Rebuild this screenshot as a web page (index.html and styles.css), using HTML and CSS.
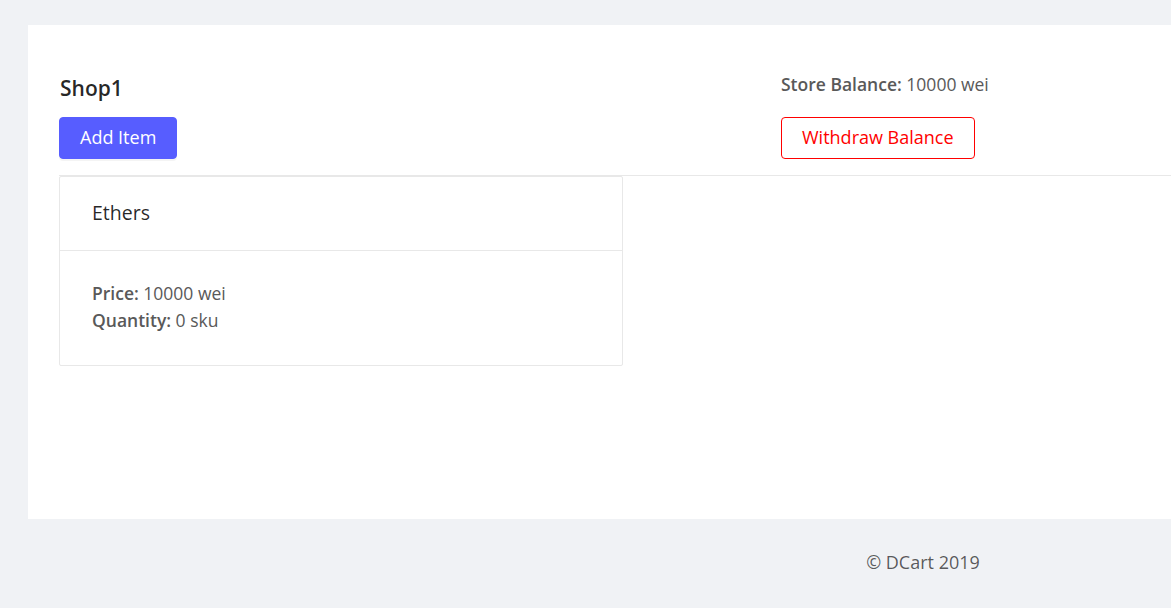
FILE: index.html
```html
<!DOCTYPE html>
<html>
<head>
<meta charset="utf-8">
<link rel="stylesheet" href="styles.css">
</head>
<body>
<div class="page">
  <main class="content">
    <div class="inner">
      <div class="top-row">
        <div class="col-left">
          <h2 class="shop-title">Shop1</h2>
          <button class="btn btn-primary">Add Item</button>
        </div>
        <div class="col-right">
          <p class="balance"><strong>Store Balance:</strong> 10000 wei</p>
          <button class="btn btn-danger">Withdraw Balance</button>
        </div>
      </div>
      <div class="divider"></div>
      <div class="card">
        <div class="card-head">Ethers</div>
        <div class="card-body">
          <div class="line"><strong>Price:</strong> 10000 wei</div>
          <div class="line"><strong>Quantity:</strong> 0 sku</div>
        </div>
      </div>
    </div>
  </main>
  <footer class="footer">© DCart 2019</footer>
</div>
</body>
</html>
```

FILE: styles.css
```css
html, body {
  margin: 0;
  padding: 0;
  background: #f0f2f5;
  overflow: hidden;
  font-family: "Open Sans", "Liberation Sans", sans-serif;
  color: rgba(0, 0, 0, 0.65);
}
.page {
  width: 1846px;
  height: 608px;
  display: flex;
  flex-direction: column;
}
.content {
  margin: 25px 0 0 28px;
  width: 1790px;
  height: 494px;
  background: #fff;
  box-sizing: border-box;
}
.inner {
  padding: 0 0 0 31px;
}
.top-row {
  display: flex;
}
.col-left {
  width: 722px;
  display: flex;
  flex-direction: column;
  align-items: flex-start;
}
.col-right {
  display: flex;
  flex-direction: column;
  align-items: flex-start;
}
.shop-title {
  margin: 48px 0 14px 1px;
  font-size: 21px;
  line-height: 30px;
  font-weight: 600;
  color: rgba(0, 0, 0, 0.85);
}
.balance {
  margin: 46px 0 20px 0;
  font-size: 17.5px;
  line-height: 26px;
  color: #595959;
}
.balance strong {
  font-weight: 600;
}
.btn {
  height: 42px;
  padding: 0 20px 3px;
  font-family: inherit;
  font-size: 18px;
  line-height: 24px;
  border-radius: 4px;
  cursor: pointer;
  box-sizing: border-box;
}
.btn-primary {
  background: #575dff;
  color: #fff;
  border: 1px solid #575dff;
  box-shadow: 0 2px 0 rgba(0, 0, 0, 0.045);
}
.btn-danger {
  background: #fff;
  color: #ff0000;
  border: 1px solid #ff0000;
}
.divider {
  height: 1px;
  background: #e8e8e8;
  margin-top: 16px;
}
.card {
  width: 564px;
  border: 1px solid #e8e8e8;
  border-radius: 2px;
  box-sizing: border-box;
}
.card-head {
  height: 74px;
  box-sizing: border-box;
  border-bottom: 1px solid #e8e8e8;
  padding: 0 32px 2px;
  display: flex;
  align-items: center;
  font-size: 19.5px;
  color: rgba(0, 0, 0, 0.85);
}
.card-body {
  padding: 29px 32px 31px;
  font-size: 17.5px;
  line-height: 27px;
  color: #595959;
}
.card-body strong {
  font-weight: 600;
}
.footer {
  flex: 1;
  display: flex;
  align-items: center;
  justify-content: center;
  padding-bottom: 4px;
  font-size: 18px;
  color: rgba(0, 0, 0, 0.65);
}
```
